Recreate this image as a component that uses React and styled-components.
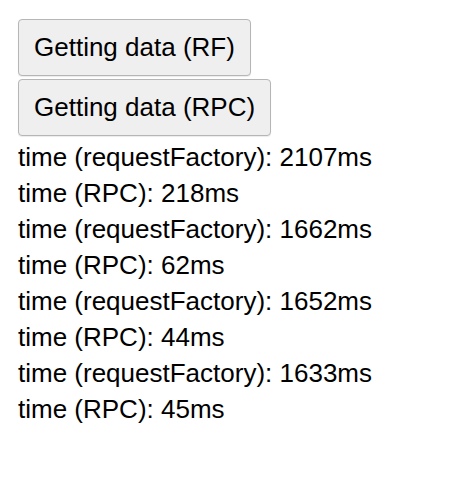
import React from "react"
import styled, { createGlobalStyle } from "styled-components"

const Global = createGlobalStyle`
body{
margin:0;
background:#ffffff;
font-family:"Liberation Sans", Arial, sans-serif;
color:#000;
}
`
const Page = styled.div`
display:flex;
flex-direction:column;
align-items:flex-start;
padding:19px 18px;
`
const Buttons = styled.div`
display:flex;
flex-direction:column;
align-items:flex-start;
gap:3px;
`
const Button = styled.button`
height:57px;
padding:0 15px;
font-family:"Liberation Sans", Arial, sans-serif;
font-size:26px;
color:#000;
background:#efefef;
border:1px solid #b6b6b6;
border-radius:4px;
box-shadow:0 1px 1px rgba(0,0,0,0.08);
`
const Log = styled.div`
margin-top:3px;
display:flex;
flex-direction:column;
`
const Line = styled.div`
font-size:26px;
line-height:36px;
white-space:nowrap;
`

const times = [
  ["requestFactory", 2107],
  ["RPC", 218],
  ["requestFactory", 1662],
  ["RPC", 62],
  ["requestFactory", 1652],
  ["RPC", 44],
  ["requestFactory", 1633],
  ["RPC", 45],
]

export default function App(){
  return(
    <Page>
      <Global/>
      <Buttons>
        <Button>Getting data (RF)</Button>
        <Button>Getting data (RPC)</Button>
      </Buttons>
      <Log>
        {times.map(([kind, ms], i) => (
          <Line key={i}>time ({kind}): {ms}ms</Line>
        ))}
      </Log>
    </Page>
  )
}
